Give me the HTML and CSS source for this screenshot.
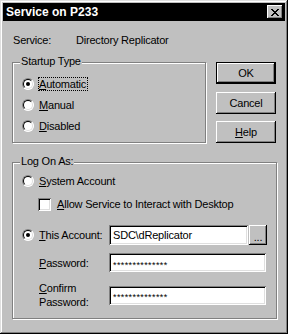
FILE: index.html
```html
<!DOCTYPE html>
<html lang="en">

<head>
    <meta charset="UTF-8">
    <title>Service on P233</title>
    <link rel="stylesheet" href="styles.css">
</head>

<body>
    <div class="window">
        <div class="titlebar">
            <span class="title">Service on P233</span>
            <span class="close">
                <svg width="8" height="7" viewBox="0 0 8 7" shape-rendering="crispEdges">
                    <path d="M0 0h2v1H0zM6 0h2v1H6zM1 1h2v1H1zM5 1h2v1H5zM2 2h4v1H2zM3 3h2v1H3zM2 4h4v1H2zM1 5h2v1H1zM5 5h2v1H5zM0 6h2v1H0zM6 6h2v1H6z" fill="#000"/>
                </svg>
            </span>
        </div>

        <div class="content">
            <div class="service-row">
                <span class="service-label">Service:</span>
                <span>Directory Replicator</span>
            </div>

            <div class="main">
                <div class="group startup">
                    <span class="group-title">Startup Type</span>
                    <div class="option">
                        <span class="radio checked"></span>
                        <span class="focus"><u>A</u>utomatic</span>
                    </div>
                    <div class="option">
                        <span class="radio"></span>
                        <span class="opt-text"><u>M</u>anual</span>
                    </div>
                    <div class="option">
                        <span class="radio"></span>
                        <span class="opt-text"><u>D</u>isabled</span>
                    </div>
                </div>

                <div class="buttons">
                    <div class="btn default">OK</div>
                    <div class="btn cancel">Cancel</div>
                    <div class="btn help"><u>H</u>elp</div>
                </div>
            </div>

            <div class="group logon">
                <span class="group-title">Log On As:</span>
                <div class="option sys">
                    <span class="radio"></span>
                    <span class="opt-text"><u>S</u>ystem Account</span>
                </div>
                <div class="option interact">
                    <span class="checkbox"></span>
                    <span class="opt-text"><u>A</u>llow Service to Interact with Desktop</span>
                </div>
                <div class="option account">
                    <span class="radio checked"></span>
                    <span class="field-label acc-label"><u>T</u>his Account:</span>
                    <span class="field acc-field">SDC\dReplicator</span>
                    <span class="browse">...</span>
                </div>
                <div class="option pwd">
                    <span class="field-label"><u>P</u>assword:</span>
                    <span class="field pwd-field">**************</span>
                </div>
                <div class="option confirm">
                    <span class="field-label two-line"><u>C</u>onfirm<br>Password:</span>
                    <span class="field pwd-field">**************</span>
                </div>
            </div>
        </div>
    </div>
</body>

</html>
```

FILE: styles.css
```css
* {
    box-sizing: border-box;
}

body {
    margin: 0;
    font-family: "Liberation Sans", Arial, sans-serif;
    font-size: 11px;
    letter-spacing: -0.2px;
    color: #000;
}

u {
    text-decoration: underline;
    text-underline-offset: 1px;
}

.window {
    width: 288px;
    height: 334px;
    padding: 3px;
    background-color: #c0c0c0;
    box-shadow: inset -1px -1px 0 #000, inset 1px 1px 0 #dfdfdf,
        inset -2px -2px 0 #808080, inset 2px 2px 0 #fff;
}

/* title bar */
.titlebar {
    height: 18px;
    background-color: #000;
    display: flex;
    align-items: center;
    justify-content: space-between;
    padding: 0 2px 0 3px;
}

.title {
    color: #fff;
    font-weight: bold;
    font-size: 12px;
    letter-spacing: 0;
}

.close {
    width: 16px;
    height: 14px;
    background-color: #c0c0c0;
    display: flex;
    align-items: center;
    justify-content: center;
    box-shadow: inset -1px -1px 0 #000, inset 1px 1px 0 #fff,
        inset -2px -2px 0 #808080;
}

.content {
    padding: 0 8px 0 9px;
}

.service-row {
    display: flex;
    height: 13px;
    line-height: 13px;
    margin-top: 13px;
    padding-left: 1px;
}

.service-label {
    width: 63px;
}

.main {
    display: flex;
    margin-top: 15px;
}

/* etched group boxes */
.group {
    position: relative;
    border: 1px solid #808080;
    box-shadow: 1px 1px 0 #fff, inset 1px 1px 0 #fff;
    padding-left: 9px;
}

.group-title {
    position: absolute;
    top: -8px;
    left: 7px;
    padding: 0 1px;
    line-height: 13px;
    background-color: #c0c0c0;
}

.startup {
    width: 194px;
    height: 81px;
    padding-top: 10px;
}

.startup .option {
    height: 21px;
}

.option {
    display: flex;
    align-items: center;
}

.radio {
    position: relative;
    width: 12px;
    height: 12px;
    border-radius: 50%;
    border: 1px solid;
    border-color: #808080 #fff #fff #808080;
    background-color: #fff;
    margin-right: 4px;
    flex-shrink: 0;
}

.radio::before {
    content: "";
    position: absolute;
    inset: 0;
    border-radius: 50%;
    border: 1px solid;
    border-color: #000 #dfdfdf #dfdfdf #000;
}

.radio.checked::after {
    content: "";
    position: absolute;
    left: 3px;
    top: 3px;
    width: 4px;
    height: 4px;
    border-radius: 50%;
    background-color: #000;
}

.opt-text {
    padding-left: 1px;
}

.focus {
    border: 1px dotted #000;
    padding: 0 1px 0 0;
    line-height: 12px;
}

/* buttons */
.buttons {
    margin-left: 10px;
    display: flex;
    flex-direction: column;
}

.btn {
    width: 60px;
    height: 22px;
    display: flex;
    align-items: center;
    justify-content: center;
    box-shadow: inset -1px -1px 0 #000, inset 1px 1px 0 #fff,
        inset -2px -2px 0 #808080;
}

.btn.default {
    border: 1px solid #000;
    box-shadow: inset -1px -1px 0 #000, inset 1px 1px 0 #fff,
        inset -2px -2px 0 #808080;
}

.btn.cancel {
    margin-top: 8px;
}

.btn.help {
    margin-top: 7px;
}

/* log on group */
.logon {
    margin-top: 19px;
    width: 265px;
    height: 157px;
    padding-top: 8px;
}

.logon .option {
    height: 20px;
}

.checkbox {
    width: 13px;
    height: 13px;
    margin-left: 16px;
    margin-right: 5px;
    background-color: #fff;
    box-shadow: inset 1px 1px 0 #808080, inset -1px -1px 0 #fff,
        inset 2px 2px 0 #000, inset -2px -2px 0 #dfdfdf;
}

.logon .interact {
    margin-top: 3px;
}

.logon .account {
    margin-top: 11px;
}

.field-label {
    width: 71px;
    flex-shrink: 0;
    padding-left: 1px;
}

.acc-label {
    width: 71px;
}

.pwd .field-label,
.confirm .field-label {
    margin-left: 16px;
}

.two-line {
    line-height: 14px;
}

.field {
    height: 20px;
    background-color: #fff;
    padding: 0 4px;
    display: flex;
    align-items: center;
    box-shadow: inset 1px 1px 0 #808080, inset -1px -1px 0 #fff,
        inset 2px 2px 0 #000, inset -2px -2px 0 #dfdfdf;
}

.acc-field {
    width: 139px;
}

.browse {
    width: 18px;
    height: 20px;
    margin-left: 1px;
    display: flex;
    align-items: flex-end;
    justify-content: center;
    padding-bottom: 4px;
    line-height: 8px;
    box-shadow: inset -1px -1px 0 #000, inset 1px 1px 0 #fff,
        inset -2px -2px 0 #808080;
}

.logon .pwd {
    margin-top: 8px;
    height: 19px;
}

.logon .confirm {
    margin-top: 9px;
    height: 28px;
}

.pwd-field {
    width: 157px;
    height: 19px;
    font-size: 9px;
    letter-spacing: 0.4px;
    padding-top: 4px;
}
```
